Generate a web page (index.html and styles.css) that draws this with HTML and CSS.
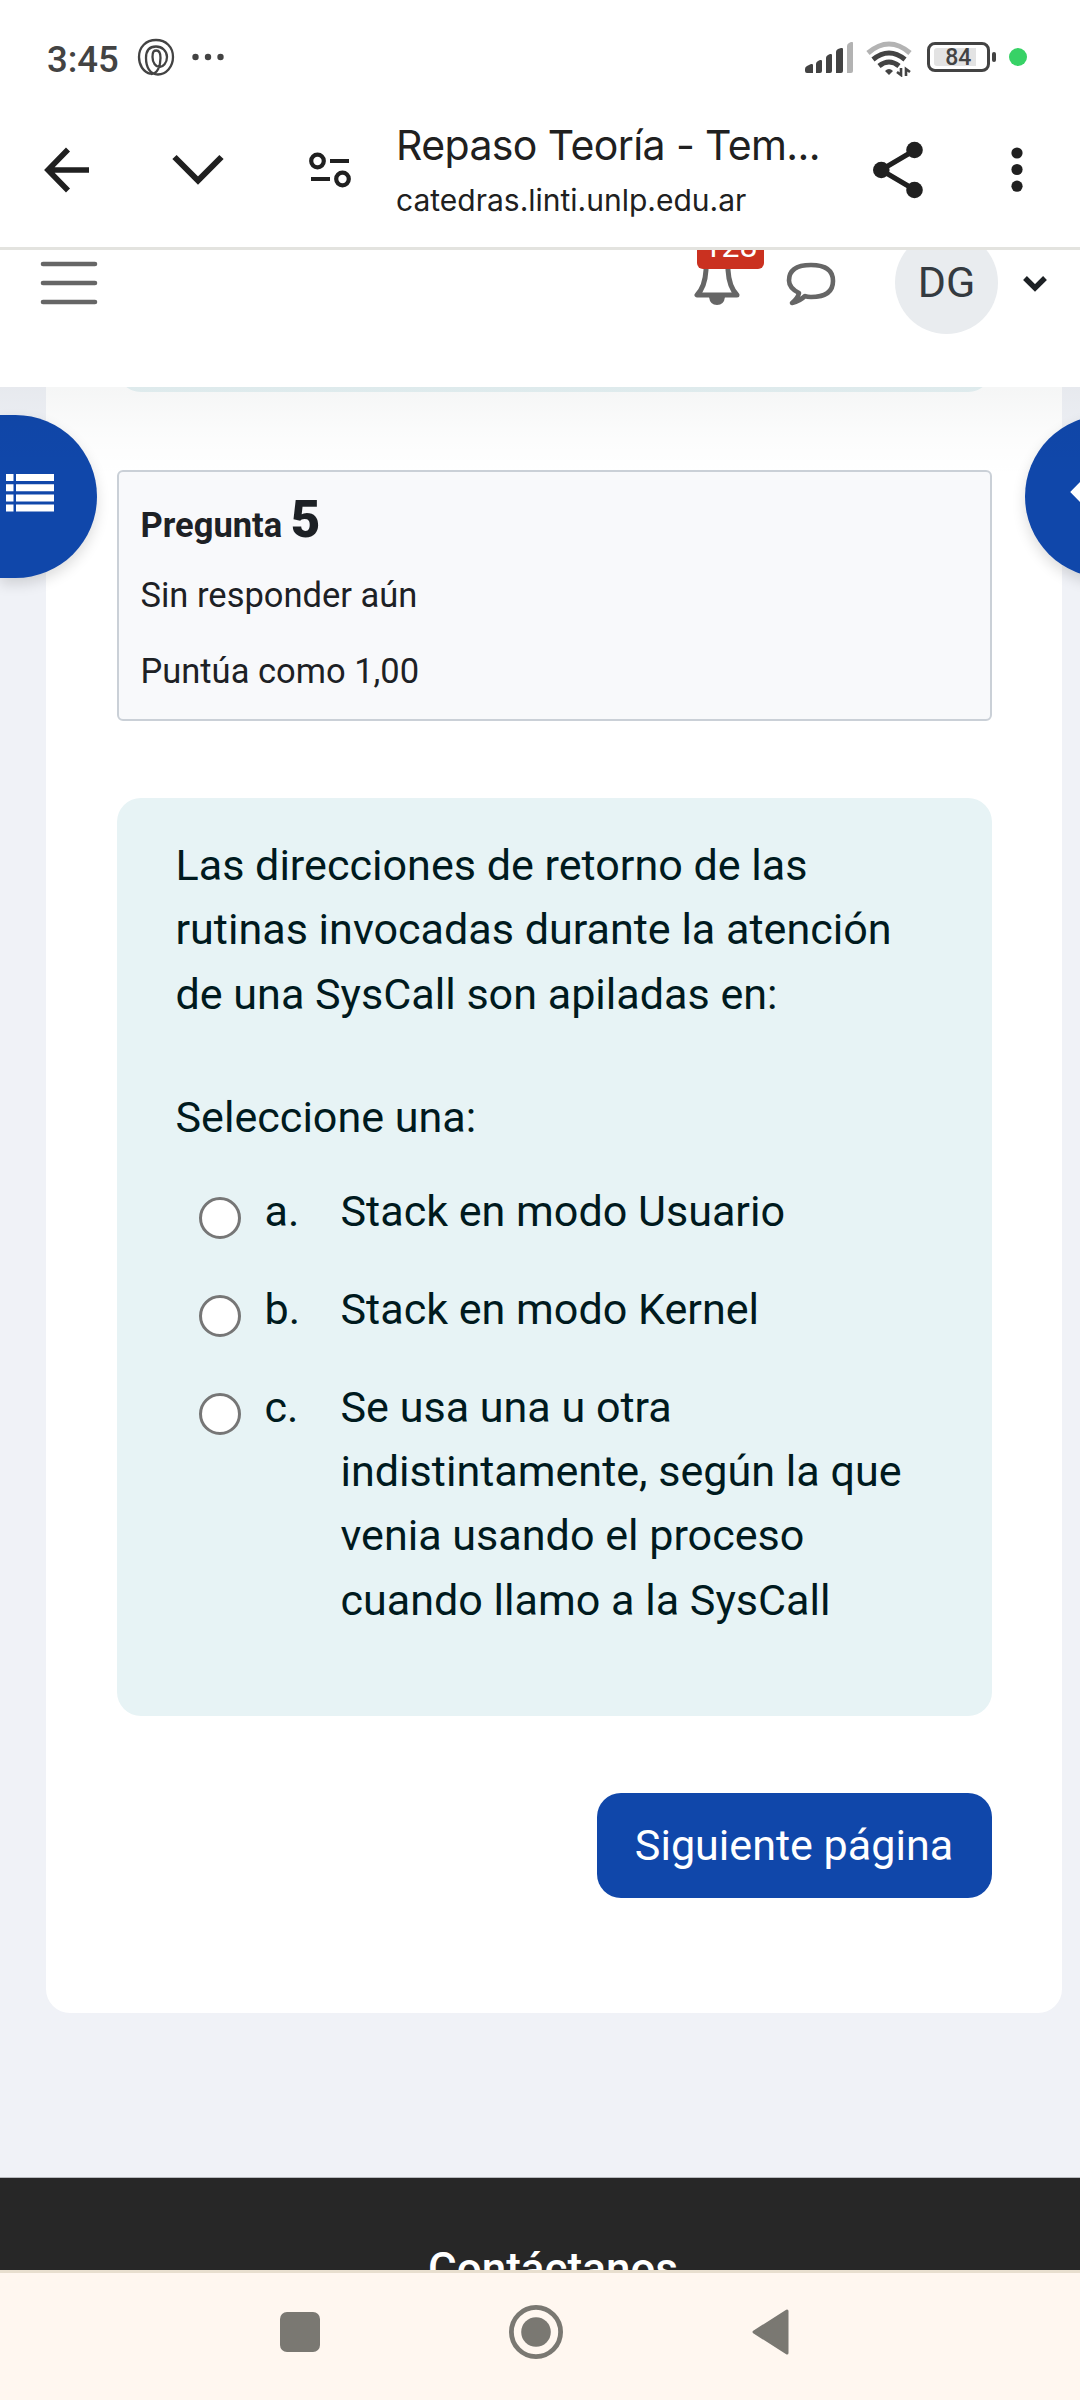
FILE: index.html
```html
<!DOCTYPE html>
<html lang="es">
<head>
<meta charset="utf-8">
<title>Repaso Teoría</title>
<link rel="stylesheet" href="styles.css">
</head>
<body>
<div class="screen">
  <header class="status">
    <span class="clock">3:45</span>
    <svg class="spiral" width="38" height="38" viewBox="0 0 38 38" fill="none" stroke="#434343" stroke-width="2.3"><path d="M14 36C6 34 2 27 2 19 2 9 9 2 19 2s17 7 17 17-7 17.500-15 17.500S9 29 9 20 13 8.500 19 8.500 30 13 30 19s-4 10-7.500 10-7-4-7-10 1.500-6.500 4-6.500 4 3 4 7.500c0 8-3 16-9.500 16"/></svg>
    <svg class="more" width="32" height="8" viewBox="0 0 32 8" fill="#434343"><circle cx="3.5" cy="4" r="3.2"/><circle cx="16" cy="4" r="3.2"/><circle cx="28.500" cy="4" r="3.2"/></svg>
    <svg class="signal" width="48" height="32" viewBox="0 0 48 32" fill="#434343"><path d="M0 27q0-2 2-3l4-2q2-.5 2 1v8H2q-2 0-2-2zM11 22q0-2 2-3l2-1q2-.5 2 1v10q0 2-2 2h-4zM21 16q0-2 2-3l2-1q2-.5 2 1v16q0 2-2 2h-4zM31 10q0-2 2-3l3-1q2-.5 2 1v22q0 2-2 2h-5z"/><path fill="#b3b3b3" d="M42 4q0-2 2-3l2-1q2-.5 2 1v28q0 2-2 2h-4z"/></svg>
    <svg class="wifi" width="46" height="36" viewBox="0 0 46 36" fill="none" stroke="#434343" stroke-width="5"><path stroke="#b3b3b3" d="M2 12Q23-6 44 12"/><path d="M7 18.500q16-13 32 0M13 25q10-8 20 0"/><path d="M23 34l-4-4q4-4 8 0z" stroke="none" fill="#434343"/><path d="M35 27v7l-4-3M40 35v-7l4 3" stroke-width="2.6"/></svg>
    <span class="battery"><span class="level">84</span></span>
    <i class="nub"></i>
    <i class="live"></i>
  </header>

  <nav class="browser">
    <svg class="b-back" width="46" height="46" viewBox="0 0 46 46" fill="none" stroke="#202020" stroke-width="5.600"><path d="M45 23H5M24 2.500L4 23l20 20.500"/></svg>
    <svg class="b-down" width="52" height="32" viewBox="0 0 52 32" fill="none" stroke="#202020" stroke-width="6"><path d="M2.500 3L26 26.500 49.500 3"/></svg>
    <svg class="b-site" width="42" height="36" viewBox="0 0 42 36" fill="none" stroke="#202020" stroke-width="4.200"><circle cx="8.500" cy="9" r="6.300"/><circle cx="33.500" cy="27" r="6.300"/><path d="M21 9h19M2 27h19"/></svg>
    <div class="page-id">
      <div class="page-title">Repaso Teoría - Tem...</div>
      <div class="page-url">catedras.linti.unlp.edu.ar</div>
    </div>
    <svg class="b-share" width="50" height="58" viewBox="0 0 50 58" fill="#202020" stroke="#202020"><path d="M42 9L8 29l34 20" fill="none" stroke-width="5"/><circle cx="41.500" cy="9" r="8.300" stroke="none"/><circle cx="8.300" cy="29" r="8.300" stroke="none"/><circle cx="41.500" cy="49" r="8.300" stroke="none"/></svg>
    <svg class="b-more" width="12" height="46" viewBox="0 0 12 46" fill="#202020"><circle cx="6" cy="6" r="5.600"/><circle cx="6" cy="22.500" r="5.600"/><circle cx="6" cy="39.200" r="5.600"/></svg>
  </nav>

  <main class="viewport">
    <div class="topbar">
      <svg class="menu" width="58" height="44" viewBox="0 0 58 44" stroke="#666" stroke-width="4.600" stroke-linecap="round"><path d="M3 3h52M3 22h52M3 41h52"/></svg>
      <div class="bell">
        <svg width="46" height="52" viewBox="0 0 46 52"><path d="M12 2V16Q11 33 3 41H43Q35 33 34 16V2" fill="none" stroke="#666" stroke-width="5" stroke-linejoin="round"/><path d="M15 43h16q-1 8-8 8t-8-8z" fill="#666"/></svg>
        <span class="badge">128</span>
      </div>
      <svg class="chat" width="50" height="44" viewBox="0 0 50 44" fill="none" stroke="#666" stroke-width="4.600" stroke-linejoin="round"><path d="M13 31Q3 26 3 18.500 3 3 25 3t22 16-22 16q-4 0-6-1-5 5-13 7 6-5 7-10z"/></svg>
      <span class="avatar">DG</span>
      <svg class="caret" width="24" height="18" viewBox="0 0 24 18" fill="none" stroke="#1d2125" stroke-width="5.400"><path d="M2 3l10 10L22 3"/></svg>
    </div>

    <div class="content">
      <section class="card">
        <div class="previous"></div>
        <div class="info">
          <h3 class="number">Pregunta <b>5</b></h3>
          <p class="state">Sin responder aún</p>
          <p class="grade">Puntúa como 1,00</p>
        </div>
        <div class="question">
          <p class="prompt">Las direcciones de retorno de las<br>rutinas invocadas durante la atención<br>de una SysCall son apiladas en:</p>
          <p class="select">Seleccione una:</p>
          <label class="answer"><i class="radio"></i><span class="letter">a.</span><span>Stack en modo Usuario</span></label>
          <label class="answer"><i class="radio"></i><span class="letter">b.</span><span>Stack en modo Kernel</span></label>
          <label class="answer"><i class="radio"></i><span class="letter">c.</span><span>Se usa una u otra<br>indistintamente, según la que<br>venia usando el proceso<br>cuando llamo a la SysCall</span></label>
        </div>
        <button class="next">Siguiente página</button>
      </section>
      <div class="drawer drawer-left"><svg width="48" height="38" viewBox="0 0 48 38" fill="#fff"><path d="M0 0h7.500v7H0zM10 0h38v7H10zM0 10.300h7.500v7H0zM10 10.300h38v7H10zM0 20.500h7.500v7H0zM10 20.500h38v7H10zM0 30.500h7.500v7H0zM10 30.500h38v7H10z"/></svg></div>
      <div class="drawer drawer-right"><svg width="30" height="44" viewBox="0 0 30 44" fill="none" stroke="#fff" stroke-width="9"><path d="M26 2L6.500 22 26 42"/></svg></div>
      <div class="shade"></div>
    </div>
    <footer class="footer">Contáctanos</footer>
  </main>

  <nav class="system">
    <svg class="recent" width="40" height="40"><rect width="40" height="40" rx="7" fill="#7a7872"/></svg>
    <svg class="home" width="54" height="54" viewBox="0 0 54 54"><circle cx="27" cy="27" r="24.600" fill="none" stroke="#7a7872" stroke-width="4.800"/><circle cx="27" cy="27" r="14.800" fill="#7a7872"/></svg>
    <svg class="prev" width="38" height="46" viewBox="0 0 38 46"><path d="M2 23L35 2v42z" fill="#7a7872" stroke="#7a7872" stroke-width="3" stroke-linejoin="round"/></svg>
  </nav>
</div>
</body>
</html>
```

FILE: styles.css
```css
* { box-sizing: border-box; }
body { margin: 0; font-family: Roboto, "Liberation Sans", sans-serif; }
p, h3 { margin: 0; font-weight: 400; }
svg { display: block; flex: none; }

.screen { width: 1080px; height: 2400px; display: flex; flex-direction: column; overflow: hidden; background: #fff; }

.status { height: 94px; flex: none; display: flex; align-items: center; padding: 20px 53px 0 47px; color: #434343; }
.clock { width: 90px; font-size: 36.5px; font-weight: 500; line-height: 40px; padding-top: 5px; }
.spiral { margin-left: 1px; }
.more { margin-left: 17px; }
.signal { margin-left: 581px; margin-top: 1px; }
.wifi { margin-left: 13px; margin-top: 3px; }
.battery { margin-left: 15px; width: 63px; height: 30px; border: 3px solid #434343; border-radius: 8px; padding: 3px 4px; }
.level { display: block; height: 18px; width: 42px; background: #e3e3e3; padding-left: 6px; font-size: 23px; font-weight: 500; line-height: 20px; text-align: center; border-radius: 3px 0 0 3px; }
.nub { width: 4px; height: 10px; margin-left: 2px; border-radius: 2px; background: #434343; }
.live { width: 18px; height: 18px; margin-left: 13px; border-radius: 50%; background: #37d266; flex: none; }

.browser { height: 156px; flex: none; display: flex; align-items: center; border-bottom: 3px solid #e3e3df; padding: 0 0 2px 44px; color: #202020; font-family: Inter, sans-serif; }
.b-down { margin-left: 82px; }
.b-site { margin-left: 85px; }
.page-id { width: 430px; margin-left: 45px; white-space: nowrap; }
.page-title { font-size: 41px; line-height: 52px; letter-spacing: -0.6px; }
.page-url { font-size: 30px; line-height: 40px; margin-top: 9px; }
.b-share { margin-left: 47px; }
.b-more { margin-left: 88px; }

.viewport { height: 2020px; flex: none; overflow: hidden; display: flex; flex-direction: column; }
.topbar { height: 137px; flex: none; display: flex; align-items: flex-start; padding-left: 40px; background: #fff; }
.menu { margin-top: 11px; }
.bell { position: relative; margin-left: 596px; margin-top: 4px; }
.badge { position: absolute; left: 3px; top: -25px; width: 67px; height: 40px; border-radius: 6px; background: #ca3120; color: #fff; font-size: 32px; line-height: 34px; text-align: center; }
.chat { margin-left: 46px; margin-top: 12px; }
.avatar { width: 103px; height: 103px; margin-left: 59px; margin-top: -19px; border-radius: 50%; background: #e9ecef; color: #343a40; font-size: 43px; line-height: 103px; text-align: center; }
.caret { margin-left: 25px; margin-top: 25px; }

.content { height: 1790px; flex: none; position: relative; background: #f0f2f7; }
.card { margin: 0 18px 0 46px; height: 1626px; background: #fff; border-radius: 0 0 24px 24px; padding: 0 70.5px; display: flex; flex-direction: column; overflow: hidden; }
.previous { height: 60px; margin-top: -55px; flex: none; background: #e7f3f5; border-radius: 24px; }
.info { height: 251px; flex: none; margin-top: 78px; border: 2px solid #cad0d7; border-radius: 6px; background: #f8f9fb; padding: 18px 22px; color: #1d2125; font-size: 34.5px; }
.number { font-size: 34.5px; font-weight: 700; line-height: 60px; }
.number b { font-size: 51px; }
.state { line-height: 52px; margin-top: 14px; }
.grade { line-height: 52px; margin-top: 24px; }
.question { height: 918px; flex: none; margin-top: 77px; border-radius: 24px; background: #e7f3f5; color: #001a1e; padding: 36px 0 0 59px; font-size: 43.1px; line-height: 64.4px; }
.select { margin-top: 58.5px; }
.answer { display: grid; grid-template-columns: 66px 76px 1fr; padding-left: 23px; margin-top: 33.6px; }
.select + .answer { margin-top: 29.5px; }
.radio { width: 42px; height: 42px; margin-top: 17px; border: 3px solid #767676; border-radius: 50%; background: #fff; }
.next { align-self: flex-end; width: 395px; height: 105px; flex: none; margin-top: 77px; border: 0; border-radius: 24px; background: #1047aa; color: #fff; font-family: inherit; font-size: 43.1px; white-space: nowrap; padding: 0; }

.drawer { position: absolute; top: 28px; height: 163px; background: #1047aa; box-shadow: 0 6px 14px rgba(0, 0, 0, .14); overflow: hidden; }
.drawer-left { left: 0; width: 97px; border-radius: 0 82px 82px 0; padding: 59px 0 0 6px; }
.drawer-right { right: -43px; width: 98px; border-radius: 82px 0 0 82px; padding: 55px 0 0 45px; }
.shade { position: absolute; left: 0; right: 0; top: 0; height: 90px; background: linear-gradient(rgba(0, 20, 20, .04), rgba(0, 20, 20, .015) 50%, transparent); }

.footer { height: 93px; flex: none; overflow: hidden; border-top: 1px solid #b9bbbf; background: #272727; color: #fff; font-size: 44px; font-weight: 500; line-height: 60px; padding: 61px 0 0 428px; }

.system { height: 130px; flex: none; border-top: 3px solid #e8dfcf; background: #fff7f0; display: flex; align-items: center; padding: 0 0 9px 280px; }
.home { margin-left: 189px; }
.prev { margin-left: 189px; }
```
